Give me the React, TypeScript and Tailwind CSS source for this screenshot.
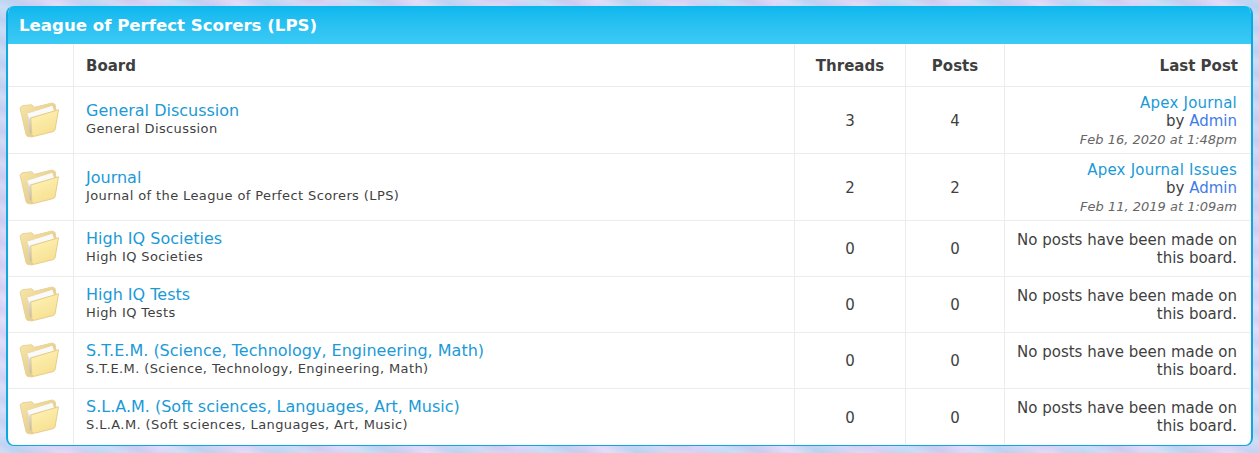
const font = { fontFamily: '"DejaVu Sans", Verdana, sans-serif' };

function Folder() {
  return (
    <svg width="41" height="36" viewBox="0 0 42 37" className="-mt-[1px] block blur-[0.3px]">
      <defs>
        <linearGradient id="fb" x1="0" y1="0" x2="1" y2="1">
          <stop offset="0" stopColor="#f8e6ab" />
          <stop offset="1" stopColor="#dcc07a" />
        </linearGradient>
        <linearGradient id="ff" x1="0.2" y1="0" x2="0.7" y2="1">
          <stop offset="0" stopColor="#fff3b4" />
          <stop offset="1" stopColor="#f6de90" />
        </linearGradient>
        <linearGradient id="fp" x1="0" y1="0" x2="0" y2="1">
          <stop offset="0" stopColor="#fbfbfb" />
          <stop offset="1" stopColor="#b9b9b9" />
        </linearGradient>
      </defs>
      <path d="M1 6 L3.5 3.8 L13 2.8 L16 5.5 L34 1 L37 2.5 L38 9 L14 36 L9 35.5 Q7.5 35 7 33 Z" fill="url(#fb)" stroke="#e6d198" strokeWidth="1" />
      <path d="M8.5 12 L34 4 L36.5 10 L13 33 L11 31 Z" fill="url(#fp)" />
      <path d="M8.5 12 L34 4 L35.6 9 L11 16 L11 18 Z" fill="#fafafa" />
      <path d="M12 16.5 L40.5 8 L37 28.5 Q36.6 30 35 30.4 L16 35.2 Q13.5 35.6 13.2 33.5 Z" fill="url(#ff)" stroke="#e5cc88" strokeWidth="1" />
    </svg>
  );
}

type Row = {
  title: string;
  desc: string;
  threads: number;
  posts: number;
  last?: { link: string; date: string };
};

const rows: Row[] = [
  { title: "General Discussion", desc: "General Discussion", threads: 3, posts: 4, last: { link: "Apex Journal", date: "Feb 16, 2020 at 1:48pm" } },
  { title: "Journal", desc: "Journal of the League of Perfect Scorers (LPS)", threads: 2, posts: 2, last: { link: "Apex Journal Issues", date: "Feb 11, 2019 at 1:09am" } },
  { title: "High IQ Societies", desc: "High IQ Societies", threads: 0, posts: 0 },
  { title: "High IQ Tests", desc: "High IQ Tests", threads: 0, posts: 0 },
  { title: "S.T.E.M. (Science, Technology, Engineering, Math)", desc: "S.T.E.M. (Science, Technology, Engineering, Math)", threads: 0, posts: 0 },
  { title: "S.L.A.M. (Soft sciences, Languages, Art, Music)", desc: "S.L.A.M. (Soft sciences, Languages, Art, Music)", threads: 0, posts: 0 },
];

const grid = "grid grid-cols-[66px_721px_111px_99px_1fr]";

export default function App() {
  return (
    <div
      style={font}
      className="h-[453px] w-[1259px] overflow-hidden bg-[#cfd6f4] bg-[repeating-linear-gradient(20deg,#ffffff1f_0px,#8fa0e01f_9px,#ffffff1f_21px),repeating-linear-gradient(100deg,#bfdaf5_0px,#d3d1f3_38px,#e0d8f9_58px,#c2daf5_88px)] p-[6px] pb-0"
    >
      <div className="h-[440px] w-[1247px] overflow-hidden rounded-[8px] border-x-[2px] border-b-[1px] border-[#0da8e0] bg-white text-[#3f3f3f]">
        <div className="-mx-[2px] flex h-[38px] items-center bg-gradient-to-b from-[#0ab7ee] to-[#3bcaf5] pl-[13px] pt-[3px] text-[16.6px] font-bold text-white">
          League of Perfect Scorers (LPS)
        </div>
        <div className={`${grid} h-[43px] border-b border-[#ececec] text-[15px] font-bold`}>
          <div className="border-r border-[#ececec]" />
          <div className="flex items-center border-r border-[#ececec] pl-[12px] pt-[3px]">Board</div>
          <div className="flex items-center justify-center border-r border-[#ececec] pt-[3px]">Threads</div>
          <div className="flex items-center justify-center border-r border-[#ececec] pt-[3px]">Posts</div>
          <div className="flex items-center justify-end pr-[13px] pt-[3px]">Last Post</div>
        </div>
        {rows.map((r, i) => (
          <div
            key={r.title}
            className={`${grid} ${i < 2 ? "h-[67px]" : "h-[56px]"} ${i < 5 ? "border-b border-[#ececec]" : ""}`}
          >
            <div className="flex items-center justify-center border-r border-[#ececec] pr-[2px]">
              <Folder />
            </div>
            <div className={`flex flex-col justify-center border-r border-[#ececec] pl-[12px] ${r.last ? "pb-[2px]" : "pb-[4px]"}`}>
              <div className="text-[16px] leading-[20px] text-[#1b9ad6]">{r.title}</div>
              <div className="text-[13px] leading-[16px] tracking-[0.39px] text-[#3f3f3f]">{r.desc}</div>
            </div>
            <div className="flex items-center justify-center border-r border-[#ececec] pt-[2px] text-[15px]">{r.threads}</div>
            <div className="flex items-center justify-center border-r border-[#ececec] pt-[2px] text-[15px]">{r.posts}</div>
            <div className={`flex flex-col justify-center pl-[12px] pr-[14px] text-right text-[15px] leading-[18px] ${r.last ? "pt-[3px]" : ""}`}>
              {r.last ? (
                <>
                  <div className="tracking-[0.22px] text-[#1b9ad6]">{r.last.link}</div>
                  <div>
                    by <span className="text-[#3f7ce8]">Admin</span>
                  </div>
                  <div className="text-[13px] italic leading-[20px] text-[#666666]">{r.last.date}</div>
                </>
              ) : (
                <div>No posts have been made on this board.</div>
              )}
            </div>
          </div>
        ))}
      </div>
    </div>
  );
}
